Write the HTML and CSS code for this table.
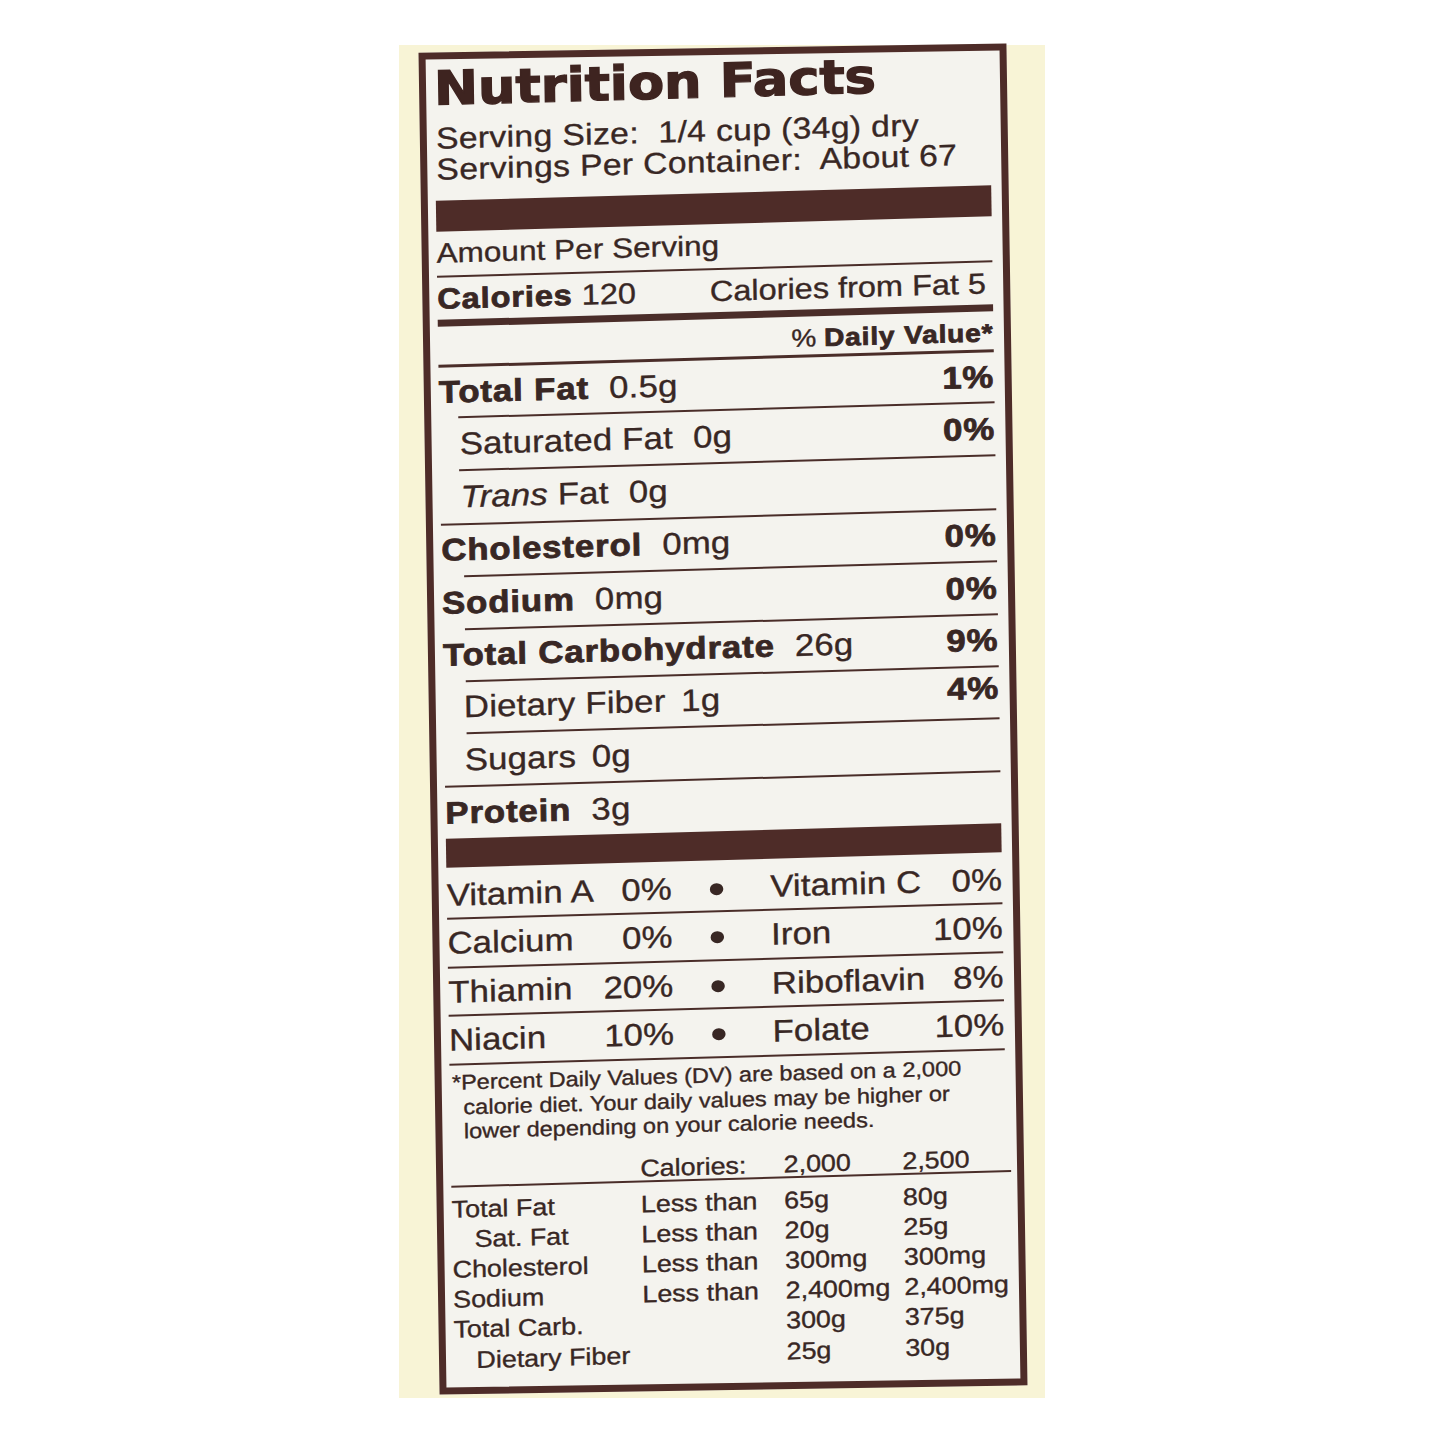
FILE: index.html
```html
<!DOCTYPE html>
<html lang="en">
<head>
<meta charset="utf-8">
<title>Nutrition Facts</title>
<link rel="stylesheet" href="styles.css">
</head>
<body>
<div class="panel">
  <div class="label">
    <div class="skew">
      <div class="content">
        <h1 class="title">Nutrition Facts</h1>
        <div class="serving">
          <p>Serving Size:&nbsp; 1/4 cup (34g) dry</p>
          <p>Servings Per Container:&nbsp; About 67</p>
        </div>
        <div class="bar bar-top"></div>
        <div class="amount">Amount Per Serving</div>
        <div class="rule"></div>
        <div class="cal-row">
          <span><b class="bold">Calories</b> 120</span>
          <span>Calories from Fat 5</span>
        </div>
        <div class="rule rule-thick"></div>
        <div class="dv-row">% <b class="bold">Daily Value*</b></div>
        <div class="rule rule-dv"></div>

        <div class="n-row r49"><span><b class="bold">Total Fat</b><span class="val">0.5g</span></span><b class="bold">1%</b></div>
        <div class="rule rule-in1"></div>
        <div class="n-row sub r51"><span>Saturated Fat<span class="val">0g</span></span><b class="bold">0%</b></div>
        <div class="rule rule-in1"></div>
        <div class="n-row sub r52"><span><i>Trans</i> Fat<span class="val">0g</span></span></div>
        <div class="rule"></div>
        <div class="n-row r50"><span><b class="bold">Cholesterol</b><span class="val">0mg</span></span><b class="bold">0%</b></div>
        <div class="rule rule-in2"></div>
        <div class="n-row r51"><span><b class="bold">Sodium</b><span class="val">0mg</span></span><b class="bold">0%</b></div>
        <div class="rule rule-in2"></div>
        <div class="n-row r50"><span><b class="bold">Total Carbohydrate</b><span class="val">26g</span></span><b class="bold">9%</b></div>
        <div class="rule rule-in2"></div>
        <div class="n-row sub r50"><span>Dietary Fiber<span class="val val-s">1g</span></span><b class="bold pct-up">4%</b></div>
        <div class="rule rule-in2"></div>
        <div class="n-row sub r51"><span>Sugars<span class="val val-s">0g</span></span></div>
        <div class="rule"></div>
        <div class="n-row r51"><span><b class="bold">Protein</b><span class="val">3g</span></span></div>
        <div class="bar bar-bottom"></div>

        <div class="v-row v-first">
          <div class="v-cell"><span>Vitamin A</span><span>0%</span></div>
          <div class="v-dot"><span class="dot"></span></div>
          <div class="v-cell v-right"><span>Vitamin C</span><span>0%</span></div>
        </div>
        <div class="rule"></div>
        <div class="v-row h47">
          <div class="v-cell"><span>Calcium</span><span>0%</span></div>
          <div class="v-dot"><span class="dot"></span></div>
          <div class="v-cell v-right"><span>Iron</span><span>10%</span></div>
        </div>
        <div class="rule"></div>
        <div class="v-row h46">
          <div class="v-cell"><span>Thiamin</span><span>20%</span></div>
          <div class="v-dot"><span class="dot"></span></div>
          <div class="v-cell v-right"><span>Riboflavin</span><span>8%</span></div>
        </div>
        <div class="rule"></div>
        <div class="v-row h47">
          <div class="v-cell"><span>Niacin</span><span>10%</span></div>
          <div class="v-dot"><span class="dot"></span></div>
          <div class="v-cell v-right"><span>Folate</span><span>10%</span></div>
        </div>
        <div class="rule"></div>

        <p class="footnote">*Percent Daily Values (DV) are based on a 2,000<br>calorie diet. Your daily values may be higher or<br>lower depending on your calorie needs.</p>

        <div class="t-grid t-head">
          <span></span><span>Calories:</span><span>2,000</span><span>2,500</span>
        </div>
        <div class="rule rule-wide"></div>
        <div class="t-grid t-body">
          <span>Total Fat</span><span>Less than</span><span>65g</span><span>80g</span>
          <span class="t-sub">Sat. Fat</span><span>Less than</span><span>20g</span><span>25g</span>
          <span>Cholesterol</span><span>Less than</span><span>300mg</span><span>300mg</span>
          <span>Sodium</span><span>Less than</span><span>2,400mg</span><span>2,400mg</span>
          <span>Total Carb.</span><span></span><span>300g</span><span>375g</span>
          <span class="t-sub">Dietary Fiber</span><span></span><span>25g</span><span>30g</span>
        </div>
      </div>
    </div>
  </div>
</div>
</body>
</html>
```

FILE: styles.css
```css
* { box-sizing: border-box; }

html, body {
  margin: 0;
  background: #ffffff;
}

body {
  padding: 45px 0 0 399px;
  min-height: 1445px;
}

.panel {
  width: 646px;
  height: 1353px;
  background: #f8f4d6;
  padding: 3px 0 0 30px;
}

.label {
  width: 588px;
  height: 1342px;
  border: 7px solid #4e2c28;
  background: #f4f3ee;
  transform: rotate(-0.9deg);
}

.skew {
  height: 100%;
  transform: skewY(-0.7deg);
}

.content {
  margin-left: 8px;
  width: 496px;
  transform: scaleX(1.12);
  transform-origin: 0 0;
  color: #382724;
  font-family: "Liberation Sans", Arial, sans-serif;
  -webkit-text-stroke: 0.35px currentColor;
}

.title {
  margin: 0;
  height: 49px;
  padding-top: 3px;
  color: #3e2420;
  font-family: "DejaVu Sans", "Liberation Sans", sans-serif;
  font-weight: 700;
  font-size: 47px;
  line-height: 46px;
  white-space: nowrap;
  -webkit-text-stroke: 1.3px currentColor;
}

.serving {
  margin-top: 11px;
  padding-left: 1px;
  font-size: 30px;
  line-height: 31px;
  letter-spacing: 0.35px;
}

.serving p {
  margin: 0;
  white-space: nowrap;
}

.bar { background: #4e2c28; }
.bar-top { margin-top: 16px; height: 31px; }
.bar-bottom { height: 29px; }

.amount {
  height: 44px;
  line-height: 44px;
  font-size: 28px;
  letter-spacing: 0.1px;
}

.rule {
  height: 2px;
  background: #4a2d29;
}
.rule-thick { height: 7px; }
.rule-dv { height: 3px; }
.rule-in1 { margin-left: 17px; }
.rule-in2 { margin-left: 20px; }
.rule-wide { margin-right: -4px; }

.bold {
  font-weight: 700;
  letter-spacing: 0.8px;
  -webkit-text-stroke: 0.8px currentColor;
}

.cal-row {
  display: flex;
  justify-content: space-between;
  height: 42px;
  line-height: 42px;
  font-size: 29px;
  padding-right: 6px;
  white-space: nowrap;
}

.dv-row {
  height: 38px;
  padding-top: 4px;
  line-height: 34px;
  font-size: 25px;
  text-align: right;
}

.n-row {
  display: flex;
  justify-content: space-between;
  font-size: 31px;
  letter-spacing: 0.2px;
  white-space: nowrap;
}
.n-row.sub { padding-left: 18px; }
.r49 { height: 49px; line-height: 49px; }
.r50 { height: 50px; line-height: 50px; }
.r51 { height: 51px; line-height: 51px; }
.r52 { height: 52px; line-height: 52px; }

.val { margin-left: 18px; }
.val-s { margin-left: 14px; }
.pct-up { position: relative; top: -4px; }

.v-row {
  display: grid;
  grid-template-columns: 201px 79px 1fr;
  font-size: 31px;
  line-height: 44px;
  letter-spacing: 0.1px;
  white-space: nowrap;
}
.v-first { height: 50px; padding-top: 6px; }
.h46 { height: 46px; padding-top: 2px; }
.h47 { height: 47px; padding-top: 2px; }

.v-cell {
  display: flex;
  justify-content: space-between;
}
.v-right { padding-left: 9px; }

.v-dot { text-align: center; }
.dot {
  display: inline-block;
  width: 12px;
  height: 12px;
  margin-bottom: 3px;
  border-radius: 50%;
  background: #382724;
}

.footnote {
  margin: 0;
  height: 78.5px;
  padding: 5px 0 0 12px;
  text-indent: -10px;
  font-size: 21px;
  line-height: 24.5px;
  white-space: nowrap;
}

.t-grid {
  display: grid;
  grid-template-columns: 169px 128px 106px 1fr;
  font-size: 24px;
  white-space: nowrap;
}
.t-head {
  height: 41.5px;
  padding-top: 17px;
  line-height: 24px;
}
.t-body {
  padding-top: 6.6px;
  line-height: 30.2px;
}
.t-sub { padding-left: 20px; }
```
